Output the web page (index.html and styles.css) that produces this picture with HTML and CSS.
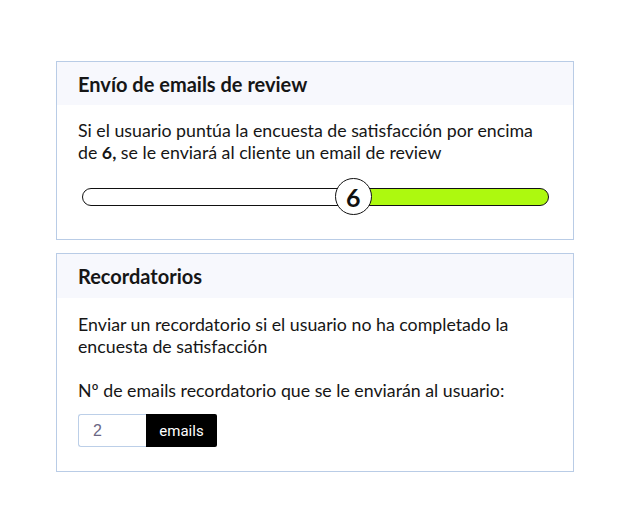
FILE: index.html
```html
<!DOCTYPE html>
<html lang="es">
<head>
<meta charset="utf-8">
<title>Configuración de encuestas</title>
<link rel="stylesheet" href="styles.css">
</head>
<body>
<main class="page">
  <section class="card">
    <header class="card-header">
      <h2 class="card-title">Envío de emails de review</h2>
    </header>
    <div class="card-body">
      <p class="text">Si el usuario puntúa la encuesta de satisfacción por encima de <strong>6,</strong> se le enviará al cliente un email de review</p>
      <div class="slider" style="--pos: 58%;">
        <div class="slider-track"></div>
        <div class="slider-knob">6</div>
      </div>
    </div>
  </section>

  <section class="card">
    <header class="card-header card-header--tall">
      <h2 class="card-title">Recordatorios</h2>
    </header>
    <div class="card-body card-body--form">
      <p class="text">Enviar un recordatorio si el usuario no ha completado la encuesta de satisfacción</p>
      <p class="text label">Nº de emails recordatorio que se le enviarán al usuario:</p>
      <div class="input-group">
        <input class="input" type="text" value="2">
        <span class="addon">emails</span>
      </div>
    </div>
  </section>
</main>
</body>
</html>
```

FILE: styles.css
```css
html, body {
  margin: 0;
  padding: 0;
  background: #ffffff;
}

body {
  font-family: "Lato", "Open Sans", "Liberation Sans", sans-serif;
  color: #161616;
}

.page {
  display: flex;
  flex-direction: column;
  gap: 13px;
  width: 518px;
  padding: 61px 0 0 56px;
}

.card {
  border: 1px solid #b9cce6;
  background: #ffffff;
}

.card-header {
  background: #f7f8fd;
  height: 43px;
  display: flex;
  align-items: center;
  padding: 0 21px;
}

.card-header--tall {
  height: 44px;
}

.card-title {
  margin: 0;
  font-size: 20px;
  font-weight: 700;
  color: #161616;
}

.card-body {
  padding: 14px 21px 22px;
}

.card-body--form {
  padding-top: 15px;
  padding-bottom: 24px;
}

.text {
  margin: 0;
  font-size: 17.75px;
  line-height: 22px;
}

.text strong {
  font-weight: 700;
}

.label {
  margin-top: 22px;
}

.slider {
  position: relative;
  height: 40px;
  margin: 14px 3px 0 4px;
  display: flex;
  align-items: center;
}

.slider-track {
  flex: 1;
  height: 18px;
  box-sizing: border-box;
  border: 1.5px solid #111111;
  border-radius: 9px;
  background: linear-gradient(to right, #ffffff 0, #ffffff var(--pos), #adf90f var(--pos), #adf90f 100%);
}

.slider-knob {
  position: absolute;
  top: 1px;
  left: calc(var(--pos) - 18px);
  width: 37px;
  height: 37px;
  box-sizing: border-box;
  border: 1.5px solid #111111;
  border-radius: 50%;
  background: #ffffff;
  display: flex;
  align-items: center;
  justify-content: center;
  font-size: 25px;
  font-weight: 700;
  color: #111111;
}

.input-group {
  display: flex;
  margin-top: 13px;
  height: 33px;
}

.input {
  width: 68px;
  box-sizing: border-box;
  margin: 0;
  border: 1px solid #bccfe8;
  border-right: none;
  border-radius: 3px 0 0 3px;
  padding: 0 0 0 14px;
  font-family: "Liberation Sans", Arial, sans-serif;
  font-size: 16px;
  color: #6b6785;
  background: #ffffff;
  outline: none;
}

.addon {
  width: 71px;
  box-sizing: border-box;
  background: #000000;
  color: #ffffff;
  border-radius: 0 2px 2px 0;
  display: flex;
  align-items: center;
  justify-content: center;
  font-family: "Roboto", "Liberation Sans", sans-serif;
  font-size: 15px;
}
```
